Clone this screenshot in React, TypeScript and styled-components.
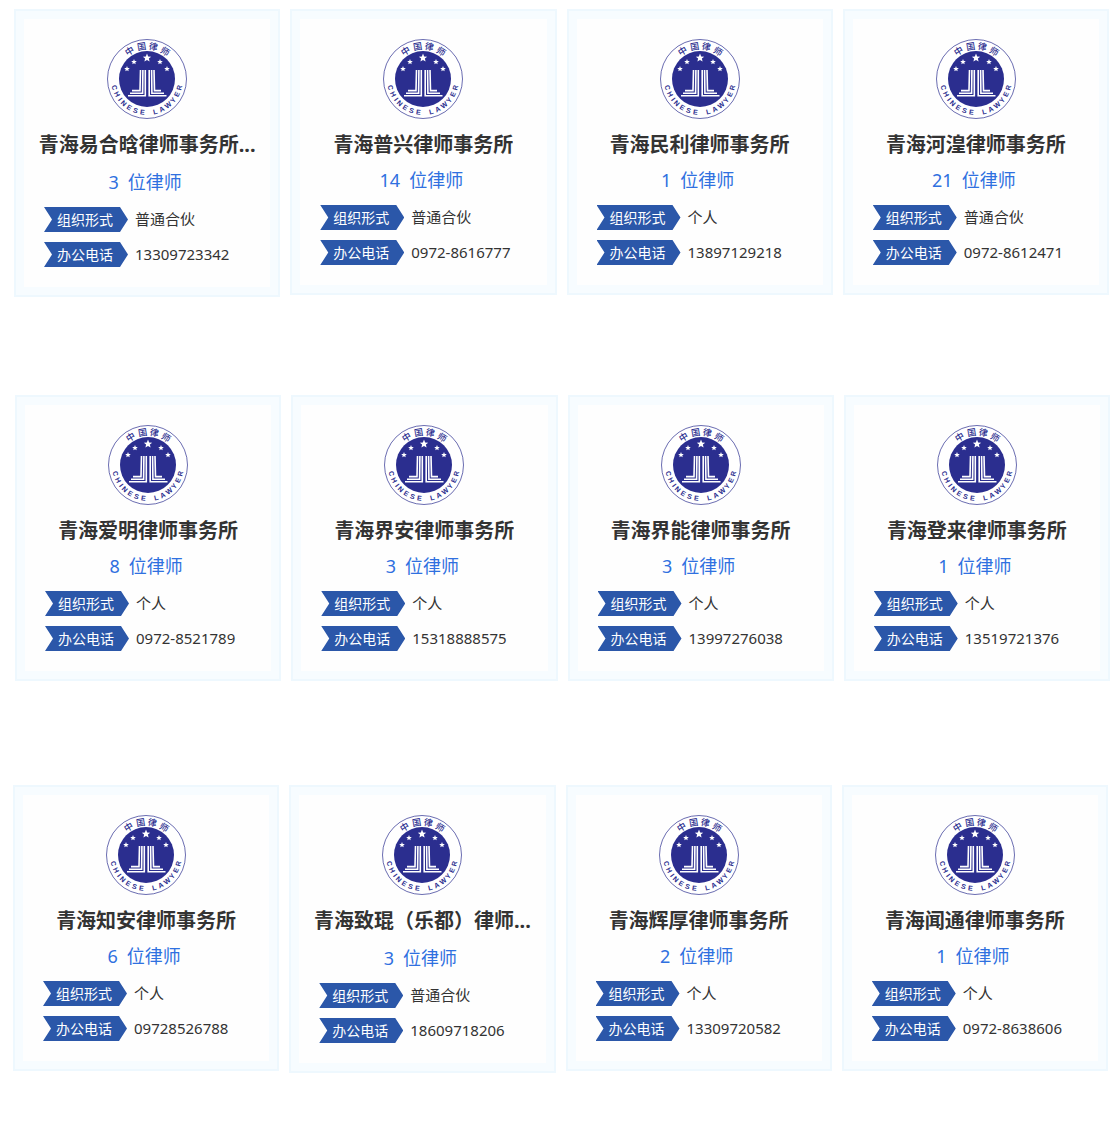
import React from "react";
import styled, { createGlobalStyle } from "styled-components";

const GlobalStyle = createGlobalStyle`
  * { box-sizing: border-box; }
  body {
    margin: 0;
    background: #fff;
    color: #333;
    font-family: "Noto Sans", "Noto Sans CJK SC", sans-serif;
  }
`;

const Page = styled.main`
  padding: 9px 0 68px;
`;

const Row = styled.ul<{ $inset: number; $below: number }>`
  display: grid;
  grid-template-columns: repeat(4, minmax(0, 1fr));
  align-items: start;
  gap: 10px;
  margin: 0 0 ${(p) => p.$below}px;
  padding: 0 ${(p) => 25 - p.$inset}px 0 ${(p) => p.$inset}px;
  list-style: none;
`;

const Card = styled.li`
  display: flex;
  flex-direction: column;
  align-items: center;
  padding: 28px 18px;
  border: 2px solid #eef8fe;
  background: #fefefe;
  box-shadow: inset 0 0 0 8px #f7fcff;
`;

const Emblem = styled.svg`
  display: block;
  width: 80px;
  height: 80px;
`;

const FirmName = styled.h2<{ $cut: boolean }>`
  margin: 0 0 ${(p) => (p.$cut ? 2 : 0)}px;
  padding-top: 2px;
  max-width: 100%;
  overflow: hidden;
  font-size: 20px;
  font-weight: 700;
  line-height: 48px;
  white-space: nowrap;
`;

const LawyerCount = styled.p`
  display: flex;
  gap: 9px;
  margin: 0 0 14px;
  padding-right: 4px;
  color: #2f70e0;
  font-size: 18px;
  line-height: 22px;
`;

const Facts = styled.dl`
  display: grid;
  gap: 10px;
  align-self: stretch;
  margin: 0;
  padding-left: 10px;
`;

const Fact = styled.div`
  display: flex;
  gap: 7px;
  line-height: 25px;
  white-space: nowrap;
`;

const Tag = styled.dt`
  width: 84px;
  padding-left: 13px;
  background: #2b57a9;
  clip-path: polygon(0 0, 76px 0, 100% 50%, 76px 100%, 0 100%, 8px 50%);
  color: #fff;
  font-size: 14px;
`;

const Value = styled.dd`
  margin: 0;
  font-size: 15px;
`;

const INK = "#2b2e8f";

function starPoints(cx: number, cy: number, r: number) {
  return Array.from({ length: 10 }, (_, i) => {
    const radius = i % 2 ? r * 0.45 : r;
    const a = (i * Math.PI) / 5;
    return `${(cx + radius * Math.sin(a)).toFixed(2)},${(cy - radius * Math.cos(a)).toFixed(2)}`;
  }).join(" ");
}

const stars = [
  [40, 19, 4.4],
  [27, 23, 2.9],
  [53, 23, 2.9],
  [20, 30, 2.9],
  [60, 30, 2.9],
];
const topAngles = [-32, -9.5, 11, 33];
const bottomAngles = [75, 63, 53, 44, 32, 20, 8, 0, -14, -26, -39, -51, -63, -75];

function LawyerEmblem() {
  return (
    <Emblem viewBox="0 0 80 80" role="img" aria-label="中国律师 CHINESE LAWYER">
      <circle cx="40" cy="40" r="39.5" fill="#fff" stroke={INK} strokeWidth="0.7" />
      <circle cx="40" cy="40" r="28" fill={INK} />
      <g fill={INK} textAnchor="middle">
        {[..."中国律师"].map((ch, i) => (
          <text key={ch} x="40" y="10.3" fontSize="9" fontWeight="500" fontFamily="Noto Sans CJK SC, sans-serif" transform={`rotate(${topAngles[i]} 40 40)`}>
            {ch}
          </text>
        ))}
        {[..."CHINESE LAWYER"].map((ch, i) =>
          ch === " " ? null : (
            <text key={i} x="40" y="76" fontSize="7" fontWeight="600" fontFamily="Liberation Sans, sans-serif" transform={`rotate(${bottomAngles[i]} 40 40)`}>
              {ch}
            </text>
          ),
        )}
      </g>
      <g fill="#fff">
        {stars.map(([x, y, r]) => (
          <polygon key={`${x}-${y}`} points={starPoints(x, y, r)} />
        ))}
      </g>
      <g fill="none" stroke="#fff" strokeWidth="1.6">
        <path d="M33.5 31L33 51.6H25M35.9 31L35.6 54.2H23M38.3 31V56.8H21" />
        <path d="M47 31L47.5 51.6H54M44.6 31L44.9 54.2H57M42.2 31V56.8H59.5" />
      </g>
    </Emblem>
  );
}

type Firm = { name: string; count: number; form: string; phone: string };

const rows: { inset: number; below: number; firms: Firm[] }[] = [
  {
    inset: 14,
    below: 98,
    firms: [
      { name: "青海易合晗律师事务所...", count: 3, form: "普通合伙", phone: "13309723342" },
      { name: "青海普兴律师事务所", count: 14, form: "普通合伙", phone: "0972-8616777" },
      { name: "青海民利律师事务所", count: 1, form: "个人", phone: "13897129218" },
      { name: "青海河湟律师事务所", count: 21, form: "普通合伙", phone: "0972-8612471" },
    ],
  },
  {
    inset: 15,
    below: 104,
    firms: [
      { name: "青海爱明律师事务所", count: 8, form: "个人", phone: "0972-8521789" },
      { name: "青海界安律师事务所", count: 3, form: "个人", phone: "15318888575" },
      { name: "青海界能律师事务所", count: 3, form: "个人", phone: "13997276038" },
      { name: "青海登来律师事务所", count: 1, form: "个人", phone: "13519721376" },
    ],
  },
  {
    inset: 13,
    below: 0,
    firms: [
      { name: "青海知安律师事务所", count: 6, form: "个人", phone: "09728526788" },
      { name: "青海致琨（乐都）律师...", count: 3, form: "普通合伙", phone: "18609718206" },
      { name: "青海辉厚律师事务所", count: 2, form: "个人", phone: "13309720582" },
      { name: "青海闻通律师事务所", count: 1, form: "个人", phone: "0972-8638606" },
    ],
  },
];

function FirmCard({ firm }: { firm: Firm }) {
  return (
    <Card>
      <LawyerEmblem />
      <FirmName $cut={firm.name.endsWith("...")}>{firm.name}</FirmName>
      <LawyerCount>
        <span>{firm.count}</span>
        <span>位律师</span>
      </LawyerCount>
      <Facts>
        <Fact>
          <Tag>组织形式</Tag>
          <Value>{firm.form}</Value>
        </Fact>
        <Fact>
          <Tag>办公电话</Tag>
          <Value>{firm.phone}</Value>
        </Fact>
      </Facts>
    </Card>
  );
}

export default function App() {
  return (
    <Page lang="zh-CN">
      <GlobalStyle />
      {rows.map((row) => (
        <Row key={row.inset} $inset={row.inset} $below={row.below}>
          {row.firms.map((firm) => (
            <FirmCard key={firm.name} firm={firm} />
          ))}
        </Row>
      ))}
    </Page>
  );
}
